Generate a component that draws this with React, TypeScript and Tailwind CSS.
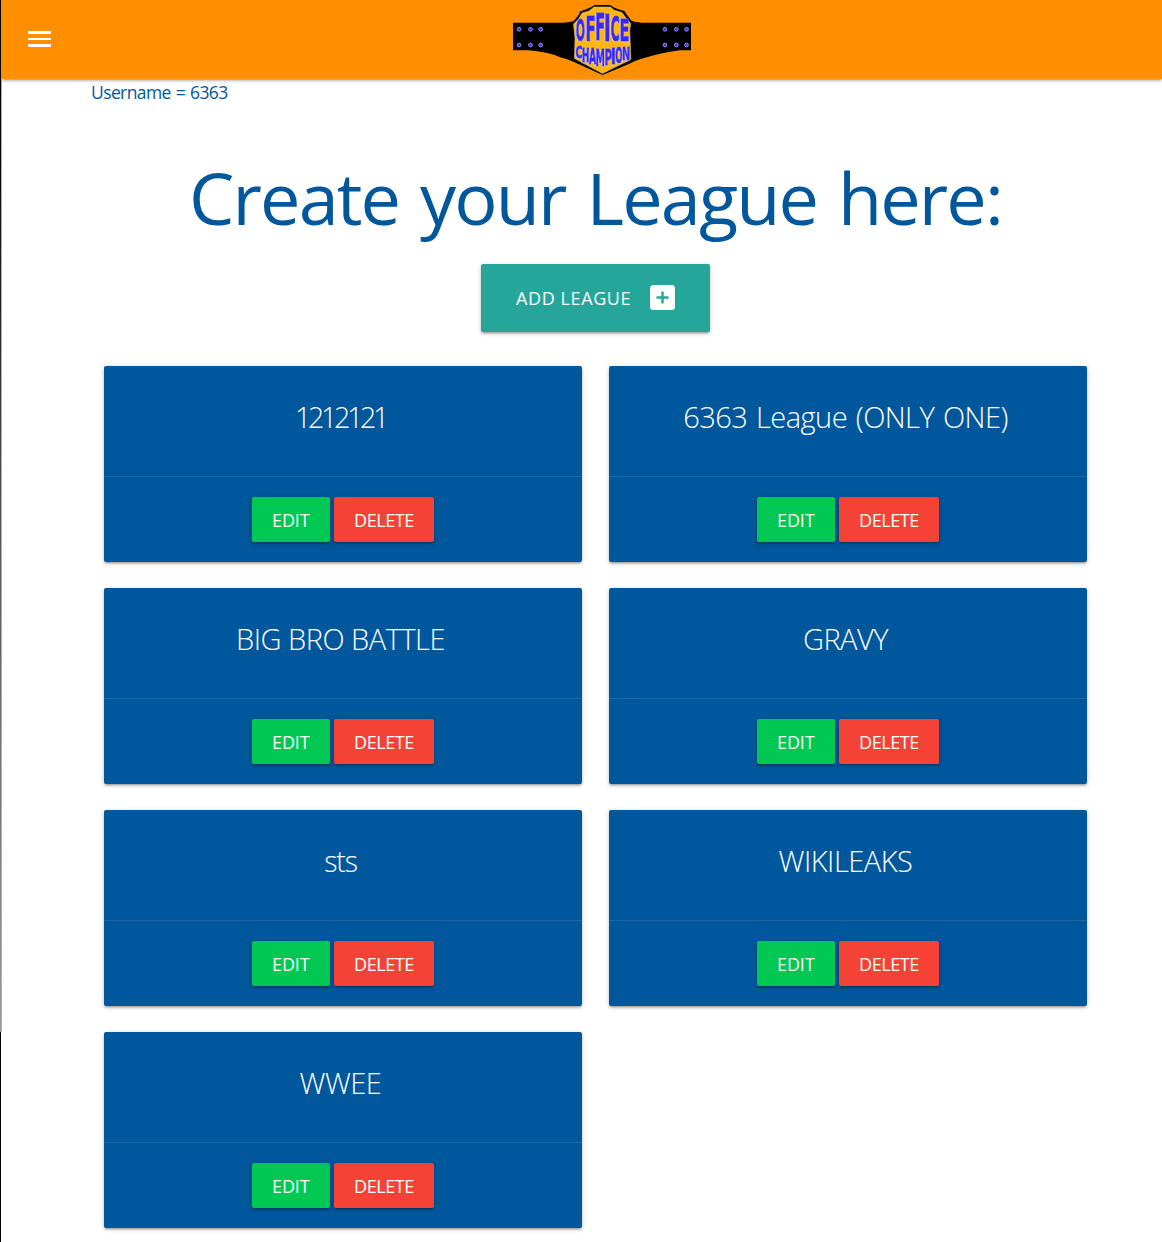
import React from "react";

const leagues = ["1212121", "6363 League (ONLY ONE)", "BIG BRO BATTLE", "GRAVY", "sts", "WIKILEAKS", "WWEE"];

const titleSpacing: Record<string, string> = {
  "1212121": "text-[28.5px] tracking-[-3.3px]",
  "6363 League (ONLY ONE)": "text-[29px] tracking-[-0.55px] [word-spacing:1.8px]",
  sts: "text-[28.5px] tracking-[-1.2px]",
};

type Glyph = [letter: string, advance: number, left: number, right: number, top: number, bottom: number];

const office: Glyph[] = [
  ["O", 8.5, 75.8, 85, 18.8, 40.5],
  ["F", 6.83, 85.4, 95.6, 15.8, 41],
  ["F", 6.83, 94.9, 105.2, 13.3, 40],
  ["I", 3.72, 103.8, 110.8, 13.3, 40.5],
  ["C", 7.34, 110.6, 119.8, 15.3, 40.5],
  ["E", 6.83, 119.6, 129.6, 18.3, 40.5],
];

const champion: Glyph[] = [
  ["C", 7.34, 75.5, 82.4, 46.6, 58.2],
  ["H", 8.37, 81.7, 89.4, 47.6, 62.2],
  ["A", 7.74, 88.9, 96.1, 48.6, 64.2],
  ["M", 9.95, 95.6, 105, 48.6, 65.7],
  ["P", 7.33, 104.4, 111.9, 48.6, 64.7],
  ["I", 3.72, 110.8, 116, 48.1, 63.7],
  ["O", 8.5, 115.2, 122.4, 47.6, 62.7],
  ["N", 8.37, 121.9, 130.1, 46.6, 59.7],
];

function Letters({ glyphs }: { glyphs: Glyph[] }) {
  return (
    <g filter="url(#letter-edge)">
      {glyphs.map(([letter, advance, left, right, top, bottom], i) => (
        <text
          key={i}
          transform={`translate(${left} ${bottom}) scale(${(right - left) / advance} ${(bottom - top) / 7.29})`}
          fontSize="10"
          fontWeight="700"
          fontFamily="DejaVu Sans, sans-serif"
          fill="#3a28f5"
          stroke="#3a28f5"
          strokeWidth="0.8"
          vectorEffect="non-scaling-stroke"
        >
          {letter}
        </text>
      ))}
    </g>
  );
}

function BeltLogo() {
  const studs = [19, 30.5, 40.7, 165, 176.3, 186.5];
  return (
    <svg width="178" height="72" viewBox="13 4 178 72" className="block">
      <filter id="letter-edge" x="-5%" y="-5%" width="110%" height="110%">
        <feDropShadow dx="-0.5" dy="0.5" stdDeviation="0.3" floodColor="#d9d2dc" />
      </filter>
      <path
        d="M13 22.8H59Q68 22.6 73.5 21.2L79 14.5 80 11.5 86.5 9.3 89.5 7.8 95 5H110L114 7.5 119 9.5 124.5 11 127 15 131.5 20.8Q137 22.8 146 22.8H191V50.2H180Q159 53 146 57.5Q135 60.5 130 63.5L102.5 75 74 62Q66 58.5 60 57.2Q48 51.5 28 50.2H13Z"
        fill="#000"
      />
      <path d="M94 7H110.5L114 10 122 12.5 126 18 130.7 23.5 129.8 30 130.8 59.5 102.5 73.5 74.5 58.5 75 38 73.5 24 78.5 19 82 13 89 11Z" fill="#ffb60d" stroke="#d4bd82" strokeWidth="0.6" />
      {studs.map((x) =>
        [29.3, 45].map((y) => <circle key={`${x}-${y}`} cx={x} cy={y} r="1.9" fill="#3e2bf5" stroke="#aaa6d6" strokeWidth="0.8" />)
      )}
      <Letters glyphs={office} />
      <Letters glyphs={champion} />
    </svg>
  );
}

const raised = "shadow-[0_2px_2px_0_rgba(0,0,0,0.14),0_3px_1px_-2px_rgba(0,0,0,0.12),0_1px_5px_0_rgba(0,0,0,0.2)]";

function LeagueCard({ name }: { name: string }) {
  return (
    <article className={`h-[196px] rounded-[2px] bg-[#01579b] text-center text-white ${raised}`}>
      <div className="flex h-[110px] justify-center pt-[29px] pr-[5px]">
        <h2 className={`leading-[44px] font-light whitespace-nowrap ${titleSpacing[name] ?? "text-[29px] tracking-[-0.5px]"}`}>{name}</h2>
      </div>
      <div className="flex h-[86px] justify-center gap-[4.5px] border-t border-white/10 pt-5">
        <button className={`h-[45px] w-[77.5px] rounded-[2px] bg-[#00c853] pt-[2px] text-[18px] tracking-[-0.15px] ${raised}`}>EDIT</button>
        <button className={`h-[45px] w-[100px] rounded-[2px] bg-[#f44336] pt-[2px] text-[18px] tracking-[-0.4px] ${raised}`}>DELETE</button>
      </div>
    </article>
  );
}

export default function App() {
  return (
    <div className="flex h-[1242px] overflow-hidden bg-white font-['Open_Sans',sans-serif] text-[#01579b]">
      <div className="flex w-[2px] shrink-0 flex-col">
        <div className="h-[1032px] border-r border-[#b0b0b0] bg-gradient-to-b from-black via-[#555] to-[#999]" />
        <div className="w-px grow bg-black" />
      </div>
      <div className="min-w-0 grow">
        <header className={`grid h-[79px] grid-cols-[511px_178px_1fr] items-start bg-[#ff8f00] ${raised}`}>
          <button aria-label="Menu" className="mt-[31px] ml-[26px] flex w-[23px] flex-col gap-[4px]">
            <span className="h-[2.6px] w-full bg-white" />
            <span className="h-[2.6px] w-full bg-white" />
            <span className="h-[2.6px] w-full bg-white" />
          </button>
          <div className="pt-1">
            <BeltLogo />
          </div>
        </header>
        <main className="ml-[89px] w-[1009px]">
          <p className="text-[17.5px] leading-[27px] tracking-[-0.6px] [word-spacing:1px]">Username = 6363</p>
          <h1 className="mt-[48.5px] h-[109.5px] text-center text-[72px] leading-[84px] tracking-[-1.85px] [word-spacing:4px] whitespace-nowrap">Create your League here:</h1>
          <button className={`mx-auto flex h-[68px] w-[229px] items-center rounded-[2px] bg-[#26a69a] pl-[35px] text-[18px] text-white ${raised}`}>
            <span className="w-[134px] text-left tracking-[0.6px] whitespace-nowrap">ADD LEAGUE</span>
            <svg width="25" height="25" viewBox="0 0 25 25" className="mb-px">
              <rect width="25" height="25" rx="3.5" fill="#fff" />
              <path d="M12.5 6.5v12M6.5 12.5h12" stroke="#26a69a" strokeWidth="2.4" />
            </svg>
          </button>
          <section className="mx-[13px] mt-[34px] grid grid-cols-[478px_478px] gap-x-[27px] gap-y-[26px]">
            {leagues.map((name) => (
              <LeagueCard key={name} name={name} />
            ))}
          </section>
        </main>
      </div>
    </div>
  );
}
